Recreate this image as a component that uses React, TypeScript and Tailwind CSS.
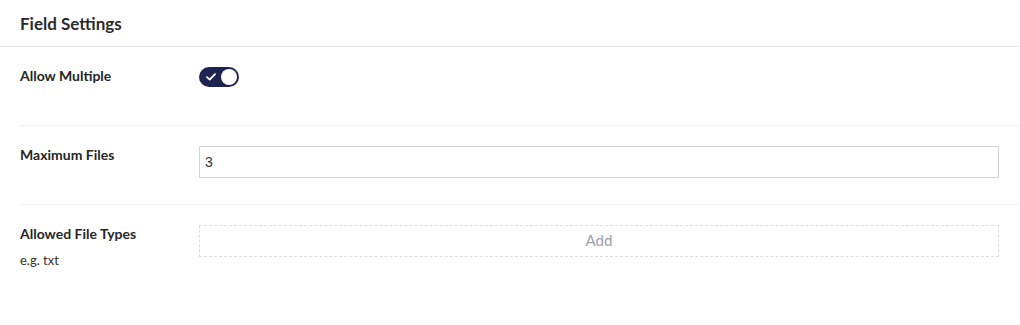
import React from "react";

export default function App() {
  return (
    <div className="w-[1020px] h-[325px] bg-white text-[#262626] overflow-hidden" style={{ fontFamily: "Lato, 'Noto Sans', sans-serif" }}>
      <div className="h-[47px] flex items-center px-5 border-b border-[#e6e6e6]">
        <h2 className="text-[17px] font-bold leading-none text-[#2b2b2b]">Field Settings</h2>
      </div>
      <div className="ml-5">
        <div className="h-[79px] flex pt-5 border-b border-[#f2f2f2]">
          <div className="w-[179px] text-[14px] font-bold leading-[18px]">Allow Multiple</div>
          <button className="w-10 h-5 rounded-full bg-[#1e2452] flex items-center justify-between pl-[7px] pr-[2px]">
            <svg width="10" height="8" viewBox="0 0 10 8" fill="none">
              <path d="M1 4.2 L3.7 6.6 L9 1.2" stroke="white" strokeWidth="1.8" strokeLinecap="round" strokeLinejoin="round" />
            </svg>
            <span className="w-4 h-4 rounded-full bg-white block" />
          </button>
        </div>
        <div className="h-[79px] flex pt-5 border-b border-[#f2f2f2]">
          <div className="w-[179px] text-[14px] font-bold leading-[18px]">Maximum Files</div>
          <div className="w-[800px] h-[32px] border border-[#d4d4d4] flex items-center px-[5px] text-[14px] text-[#333]" style={{ fontFamily: "'Liberation Sans', Arial, sans-serif" }}>
            3
          </div>
        </div>
        <div className="flex pt-5">
          <div className="w-[179px]">
            <div className="text-[14px] font-bold leading-[18px]">Allowed File Types</div>
            <div className="text-[13px] leading-[16px] mt-[9px] text-[#333]">e.g. txt</div>
          </div>
          <div className="w-[800px] h-[32px] border border-dashed border-[#dcdcdc] flex items-center justify-center pb-[1px] text-[15px] font-medium text-[#a3a5b0]">
            Add
          </div>
        </div>
      </div>
    </div>
  );
}
